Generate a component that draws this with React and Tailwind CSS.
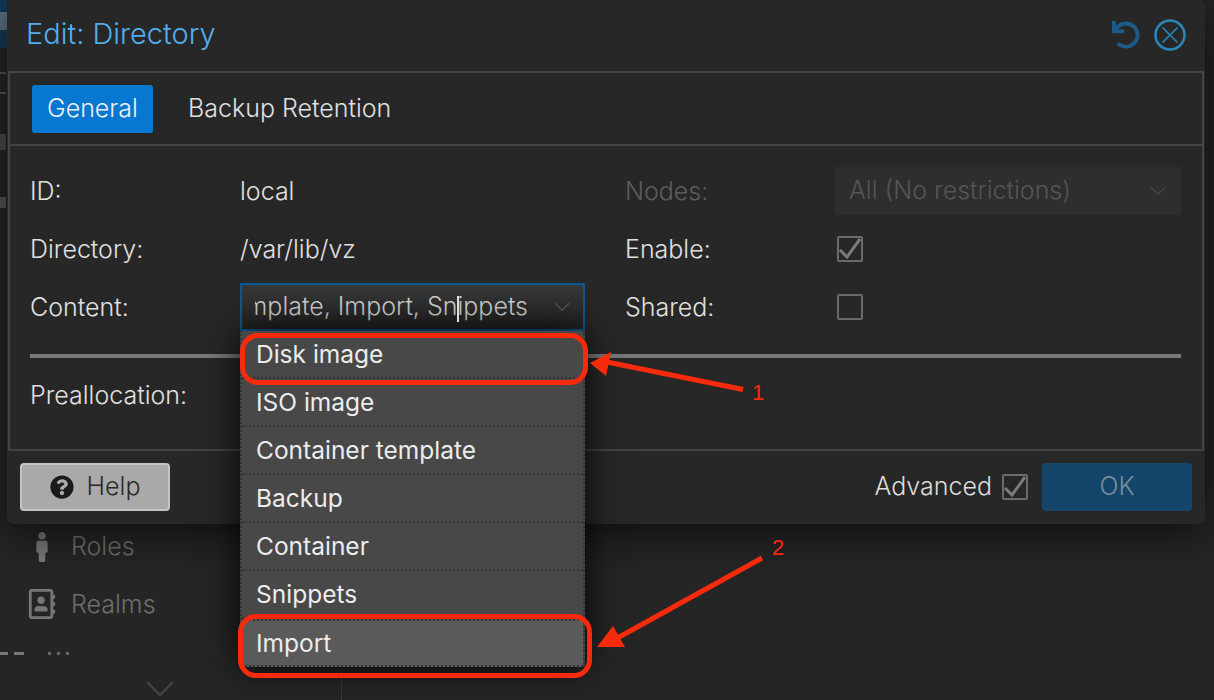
import React from "react";
import { FaUndo, FaQuestionCircle, FaMale, FaRegAddressBook } from "react-icons/fa";

const menuItems = ["Disk image", "ISO image", "Container template", "Backup", "Container", "Snippets", "Import"];

const Chevron = ({ className }) => (
  <svg viewBox="0 0 20 12" fill="none" stroke="currentColor" strokeWidth="1.6" className={className}>
    <path d="M1.5 1.5 L10 10 L18.5 1.5" />
  </svg>
);

const CheckBox = ({ checked }) => (
  <span className="relative block w-[26px] h-[26px] border-2 border-[#6a6a6a] rounded-[2px]">
    {checked && (
      <svg viewBox="0 0 26 26" fill="none" className="absolute -left-[2px] -top-[2px] w-[26px] h-[26px] text-[#7a7a7a]" stroke="currentColor" strokeWidth="3">
        <path d="M3 14 L10 21 L23 3" />
      </svg>
    )}
  </span>
);

const Row = ({ label, children }) => (
  <div className="flex items-center h-[58px]">
    <span className="w-[210px] text-[#e0e0e0] pt-[1px]">{label}</span>
    {children}
  </div>
);

export default function App() {
  return (
    <div className="relative w-[1214px] h-[700px] overflow-hidden bg-[#252525] text-[25px] font-light font-['Inter',sans-serif]">
      {/* what is left of the page behind the dialog */}
      <div className="pt-[523px] pl-[28px] text-[#6e6e6e]">
        <div className="flex items-center h-[48px]">
          <span className="w-[28px] flex justify-center"><FaMale className="w-[26px] h-[30px] text-[#777777]" /></span>
          <span className="ml-[15px]">Roles</span>
        </div>
        <div className="flex items-center h-[66px]">
          <span className="w-[28px] flex justify-center"><FaRegAddressBook className="w-[28px] h-[30px] text-[#777777]" /></span>
          <span className="ml-[15px] pt-[1px]">Realms</span>
        </div>
        <Chevron className="ml-[117px] mt-[43px] w-[30px] h-[18px] text-[#454545]" />
      </div>
      <div className="absolute left-[341px] top-[670px] w-[1px] h-[30px] bg-[#3a3a3a]" />
      <div className="absolute left-0 top-[652px] flex items-start gap-[6px]">
        <span className="w-[8px] h-[3px] bg-[#777777]" />
        <span className="w-[10px] h-[3px] bg-[#777777]" />
        <span className="ml-[18px] w-[3px] h-[3px] bg-[#666666]" />
        <span className="w-[3px] h-[3px] bg-[#666666]" />
        <span className="w-[3px] h-[3px] bg-[#666666]" />
      </div>

      {/* bits of the page at the left edge */}
      <div className="absolute left-0 top-0 w-[7px] h-[48px] bg-[#123a58]">
        <div className="mt-[12px] h-[18px] bg-[#59707f]" />
      </div>
      <div className="absolute left-0 top-[72px] w-[6px] h-[22px] border-y-2 border-[#555555]" />
      <div className="absolute left-0 top-[134px] w-[6px] h-[16px] bg-[#4a4a4a]" />
      <div className="absolute left-0 top-[197px] w-[6px] h-[11px] bg-[#555555]" />

      {/* dialog */}
      <div className="absolute left-[7px] top-0 w-[1198px] h-[524px] flex flex-col bg-[#272727] rounded-[6px] shadow-[0_10px_40px_rgba(0,0,0,0.6)]">
        <div className="h-[71px] shrink-0 flex items-center justify-between pl-[19px] pr-[19px] pb-[3px]">
          <span className="text-[29px] text-[#52aeee]">Edit: Directory</span>
          <div className="flex items-center gap-[14px] pt-[1px]">
            <FaUndo className="w-[28px] h-[28px] text-[#1d5a88]" />
            <svg viewBox="0 0 32 32" fill="none" className="w-[32px] h-[32px] text-[#2a86b8]" stroke="currentColor">
              <circle cx="16" cy="16" r="14.5" strokeWidth="2.5" />
              <path d="M8.5 8.5 L23.5 23.5 M23.5 8.5 L8.5 23.5" strokeWidth="1.6" />
            </svg>
          </div>
        </div>

        <div className="ml-[1px] mr-[1px] h-[380px] shrink-0 border-2 border-[#444444] flex flex-col">
          <div className="h-[73px] shrink-0 flex items-center pl-[22px] border-b-2 border-[#444444]">
            <span className="w-[121px] h-[48px] flex items-center justify-center rounded-[3px] bg-[#0678d0] text-[#f0f0f0]">General</span>
            <span className="ml-[35px] text-[#e0e0e0]">Backup Retention</span>
          </div>

          <div className="pl-[20px] pr-[21px] pt-[16px]">
            <div className="flex">
              <div className="w-[596px]">
                <Row label="ID:"><span className="text-[#e0e0e0] pt-[1px]">local</span></Row>
                <Row label="Directory:"><span className="text-[#e0e0e0] pt-[1px]">/var/lib/vz</span></Row>
                <Row label="Content:">
                  <span className="w-[345px] h-[48px] flex items-center border-2 border-[#0b5a94] bg-gradient-to-b from-[#383838] to-[#232323]">
                    <span className="ml-[13px] w-[273px] overflow-hidden flex justify-end whitespace-nowrap text-[#d0d0d0]">
                      <span>template, Import, Snippets</span>
                    </span>
                    <Chevron className="ml-[25px] w-[18px] h-[10px] text-[#555555]" />
                  </span>
                </Row>
              </div>
              <div className="flex-1">
                <div className="flex items-center h-[58px]">
                  <span className="w-[210px] text-[#5c5c5c] pt-[1px]">Nodes:</span>
                  <span className="w-[346px] h-[48px] flex items-center justify-between pl-[14px] pr-[14px] bg-[#2e2e2e] text-[#555555]">
                    All (No restrictions)
                    <Chevron className="w-[18px] h-[10px] text-[#444444]" />
                  </span>
                </div>
                <div className="flex items-center h-[58px]">
                  <span className="w-[212px] text-[#e0e0e0] pt-[1px]">Enable:</span>
                  <CheckBox checked />
                </div>
                <div className="flex items-center h-[58px]">
                  <span className="w-[212px] text-[#e0e0e0] pt-[1px]">Shared:</span>
                  <CheckBox />
                </div>
              </div>
            </div>
            <div className="mt-[18px] h-[4px] bg-[#787878]" />
            <div className="mt-[19px] text-[#e0e0e0]">Preallocation:</div>
          </div>
        </div>

        <div className="flex-1 flex items-center justify-between pl-[13px] pr-[13px] pb-[2px]">
          <span className="w-[150px] h-[48px] flex items-center justify-center gap-[13px] rounded-[4px] border-2 border-[#c4c4c4] bg-[#a9a9a9] text-[#2a2a2a]">
            <FaQuestionCircle className="w-[24px] h-[24px] text-[#1a1a1a]" />
            Help
          </span>
          <div className="flex items-center">
            <span className="text-[#dcdcdc]">Advanced</span>
            <span className="ml-[10px]"><CheckBox checked /></span>
            <span className="ml-[14px] w-[150px] h-[48px] flex items-center justify-center rounded-[4px] bg-[#14466b] text-[#7d8c98]">OK</span>
          </div>
        </div>
      </div>

      {/* open dropdown */}
      <div className="absolute left-[240px] top-[331px] w-[345px] bg-[#484848] shadow-[0_0_34px_rgba(0,0,0,0.9)] border-x-2 border-dotted border-[#353535]">
        {menuItems.map((item, i) => (
          <div
            key={item}
            className={`h-[48px] flex items-center pl-[14px] text-[24.5px] text-[#ececec] font-normal border-b-2 border-dotted border-[#333333] ${i === 6 ? "bg-[#5a5a5a] border-t-2" : ""}`}
          >
            {item}
          </div>
        ))}
      </div>
      <div className="absolute left-[457px] top-[296px] w-[2px] h-[26px] bg-[#e0e0e0]" />

      {/* annotations */}
      <div className="absolute left-[240px] top-[333px] w-[348px] h-[52px] rounded-[18px] border-[5px] border-[#f72a0c]" />
      <div className="absolute left-[238px] top-[614px] w-[354px] h-[64px] rounded-[18px] border-[5px] border-[#f72a0c]" />
      <svg className="absolute left-0 top-0 w-[1214px] h-[700px] pointer-events-none" viewBox="0 0 1214 700">
        <path d="M743 389.5 L602 361" stroke="#f72a0c" strokeWidth="5" />
        <path d="M590 363 L611 352 L606 376 Z" fill="#f72a0c" />
        <path d="M762 558 L612 641" stroke="#f72a0c" strokeWidth="5" />
        <path d="M597 647 L613 626 L625 647 Z" fill="#f72a0c" />
      </svg>
      <span className="absolute left-[752px] top-[381px] text-[22px] leading-[24px] font-normal font-['Liberation_Sans',sans-serif] text-[#f72a0c]">1</span>
      <span className="absolute left-[772px] top-[536px] text-[22px] leading-[24px] font-normal font-['Liberation_Sans',sans-serif] text-[#f72a0c]">2</span>
    </div>
  );
}
